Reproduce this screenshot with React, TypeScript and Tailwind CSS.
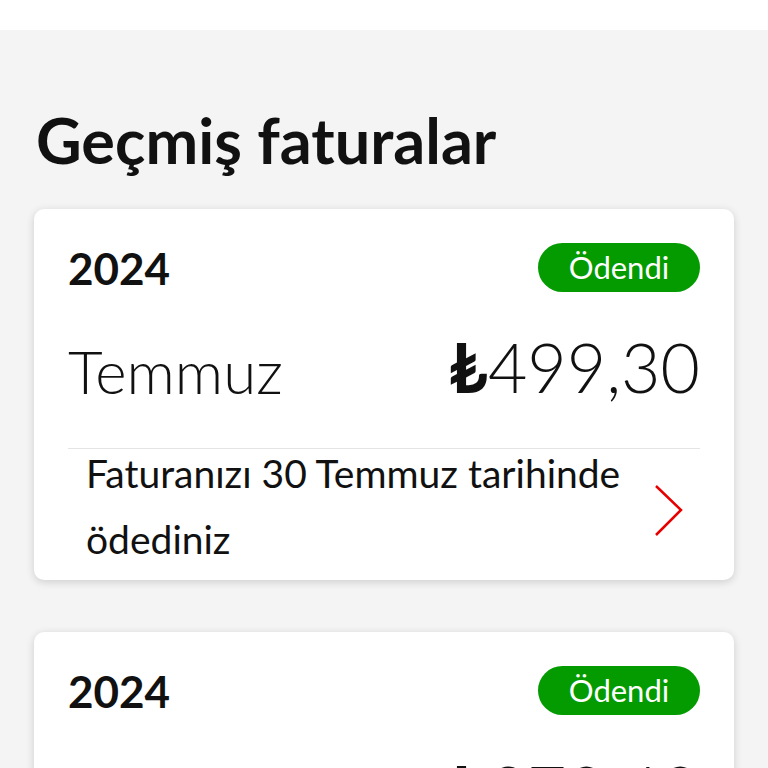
import React from "react";

type Bill = {
  year: string;
  month: string;
  amount: string;
  note: string;
};

const bills: Bill[] = [
  {
    year: "2024",
    month: "Temmuz",
    amount: "499,30",
    note: "Faturanızı 30 Temmuz tarihinde ödediniz",
  },
  {
    year: "2024",
    month: "Haziran",
    amount: "370,40",
    note: "Faturanızı 30 Haziran tarihinde ödediniz",
  },
];

function Chevron() {
  return (
    <svg width="30" height="54" viewBox="0 0 30 54" fill="none">
      <path d="M2 2 L27 26 L2 51" stroke="#e60000" strokeWidth="2.5" />
    </svg>
  );
}

function BillCard({ bill }: { bill: Bill }) {
  return (
    <div className="mx-[34px] rounded-[10px] bg-white px-[34px] pb-[8px] pt-[34px] shadow-[0_2px_8px_rgba(0,0,0,0.16)]">
      <div className="flex items-center justify-between">
        <span className="text-[44px] font-bold leading-none text-[#111]">
          {bill.year}
        </span>
        <span className="flex h-[49px] w-[162px] items-center justify-center rounded-full bg-[#039b00] text-[31px] text-white">
          Ödendi
        </span>
      </div>
      <div className="mt-[41px] flex items-end justify-between pb-[47px]">
        <span className="text-[60px] font-light leading-none text-[#111]">
          {bill.month}
        </span>
        <span className="text-[68px] font-light leading-none text-[#111]">
          <span className="font-bold">₺</span>
          {bill.amount}
        </span>
      </div>
      <div className="flex items-center justify-between border-t border-[#e4e4e4] pl-[18px] pr-[16px]">
        <p className="-mt-[9px] w-[560px] text-[39px] leading-[66px] text-[#111]">
          {bill.note}
        </p>
        <Chevron />
      </div>
    </div>
  );
}

export default function App() {
  return (
    <div
      className="min-h-screen bg-[#f4f4f4]"
      style={{ fontFamily: "Lato, 'Open Sans', sans-serif" }}
    >
      <div className="h-[30px] bg-white" />
      <h1 className="px-[36px] pb-[29px] pt-[70px] text-[63px] font-bold leading-[80px] text-[#111]">
        Geçmiş faturalar
      </h1>
      <div className="flex flex-col gap-[52px] pb-10">
        {bills.map((b, i) => (
          <BillCard key={i} bill={b} />
        ))}
      </div>
    </div>
  );
}
